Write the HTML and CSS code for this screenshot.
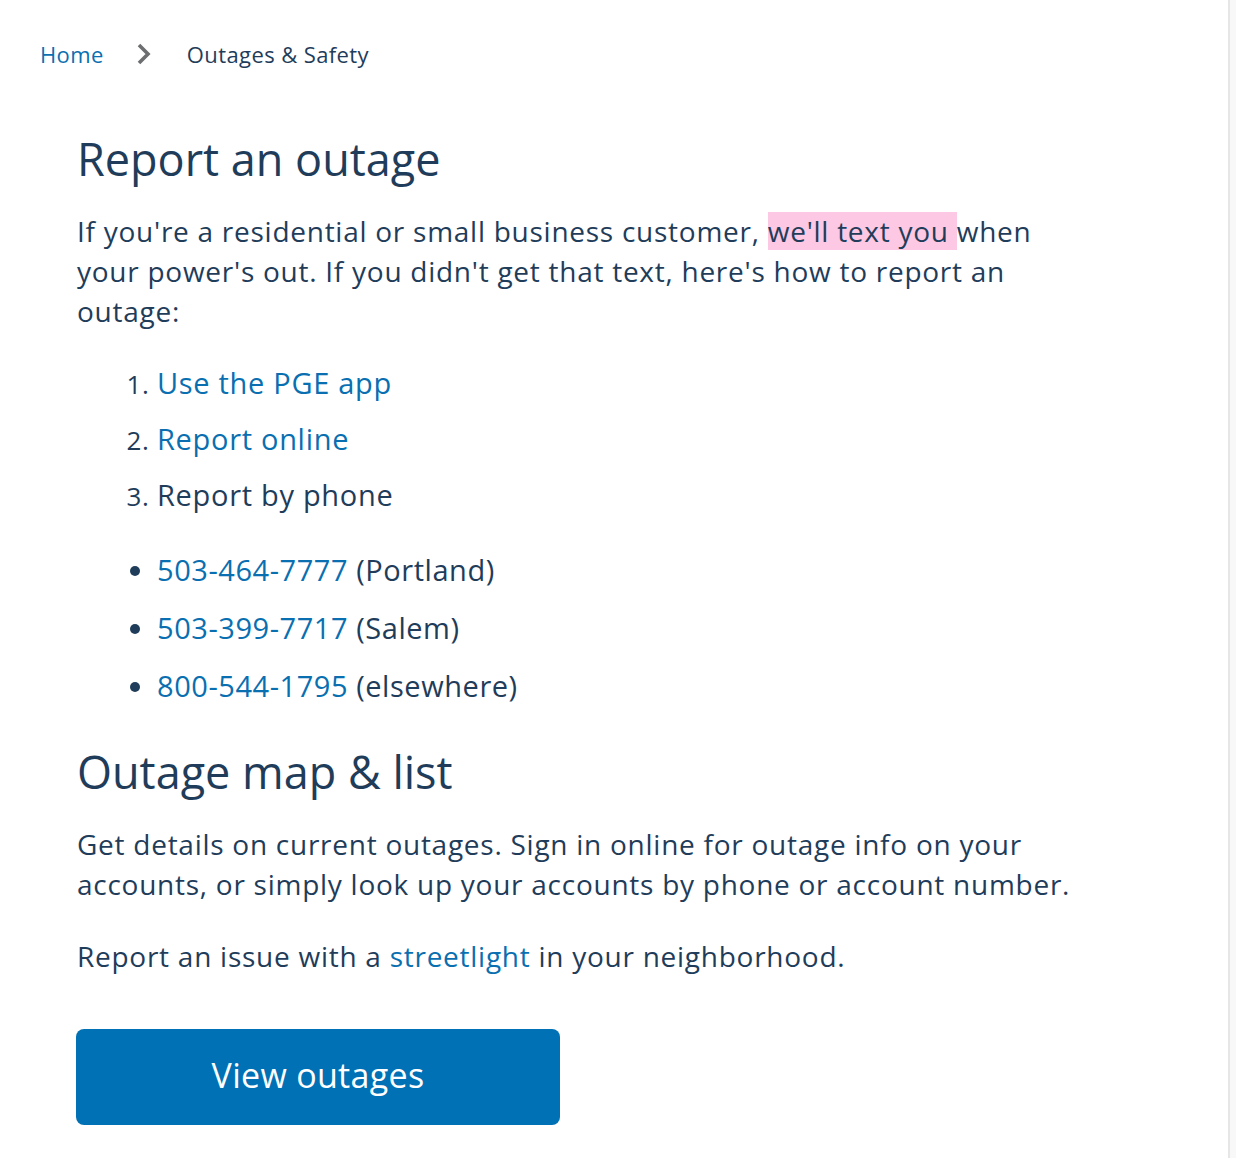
FILE: index.html
```html
<!DOCTYPE html>
<html lang="en">
<head>
<meta charset="utf-8">
<title>Outages &amp; Safety</title>
<link rel="stylesheet" href="styles.css">
</head>
<body>
<div class="page">
  <nav class="breadcrumb">
    <a class="crumb-link" href="#">Home</a>
    <svg class="crumb-sep" width="16" height="24" viewBox="0 0 16 24" aria-hidden="true"><path d="M3 3 L12 12 L3 21" fill="none" stroke="#6d6e70" stroke-width="3.6"/></svg>
    <span class="crumb-current">Outages &amp; Safety</span>
  </nav>
  <main class="content">
    <h1 class="heading">Report an outage</h1>
    <p class="para">If you're a residential or small business customer, <mark class="hl">we'll text you </mark>when your power's out. If you didn't get that text, here's how to report an outage:</p>
    <ol class="steps">
      <li><a href="#" class="link">Use the PGE app</a></li>
      <li><a href="#" class="link">Report online</a></li>
      <li>Report by phone</li>
    </ol>
    <ul class="phones">
      <li><a href="#" class="link">503-464-7777</a> (Portland)</li>
      <li><a href="#" class="link">503-399-7717</a> (Salem)</li>
      <li><a href="#" class="link">800-544-1795</a> (elsewhere)</li>
    </ul>
    <h2 class="heading heading-2">Outage map &amp; list</h2>
    <p class="para">Get details on current outages. Sign in online for outage info on your accounts, or simply look up your accounts by phone or account number.</p>
    <p class="para para-gap">Report an issue with a <a href="#" class="link">streetlight</a> in your neighborhood.</p>
    <a href="#" class="btn">View outages</a>
  </main>
</div>
</body>
</html>
```
FILE: styles.css
```css
html, body {
  margin: 0;
  padding: 0;
  background: #f8f8f8;
}
body {
  font-family: "Open Sans", "Liberation Sans", sans-serif;
  color: #1f3d5a;
}
.page {
  width: 1230px;
  min-height: 1158px;
  background: #fff;
  border-right: 2px solid #e6e6e6;
  box-sizing: border-box;
}
.breadcrumb {
  display: flex;
  align-items: center;
  padding: 39px 0 0 40px;
  height: 30px;
  font-size: 22px;
  letter-spacing: 0.4px;
}
.crumb-link {
  color: #0a6fb0;
  text-decoration: none;
}
.crumb-sep {
  margin: 0 35px 0 32px;
}
.crumb-current {
  color: #1f3d5a;
}
.content {
  padding: 0 0 0 77px;
  width: 1010px;
}
.heading {
  font-weight: 400;
  font-size: 45px;
  line-height: 56px;
  margin: 62px 0 0 0;
  color: #1f3d5a;
}
.heading-2 {
  margin-top: 38px;
}
.para {
  font-size: 28px;
  line-height: 40px;
  letter-spacing: 0.74px;
  margin: 24px 0 0 0;
}
.para-gap {
  margin-top: 32px;
}
.hl {
  background: #fcc8e3;
  color: inherit;
}
.link {
  color: #0a6fb0;
  text-decoration: none;
}
.steps {
  margin: 32px 0 0 0;
  padding: 0 0 0 80px;
  font-size: 29px;
  line-height: 40px;
  letter-spacing: 0.7px;
}
.steps li {
  margin-bottom: 16px;
  padding-left: 0;
}
.steps li::marker {
  font-size: 26px;
}
.phones {
  margin: 35px 0 0 0;
  padding: 0 0 0 80px;
  font-size: 29px;
  line-height: 40px;
  letter-spacing: 0.55px;
}
.phones li {
  margin-bottom: 18px;
}
.btn {
  display: flex;
  align-items: center;
  justify-content: center;
  box-sizing: border-box;
  width: 484px;
  height: 96px;
  padding-bottom: 5px;
  margin: 53px 0 0 -1px;
  background: #0071b5;
  color: #fff;
  border-radius: 8px;
  font-size: 34px;
  letter-spacing: 0.3px;
  text-decoration: none;
}
```
